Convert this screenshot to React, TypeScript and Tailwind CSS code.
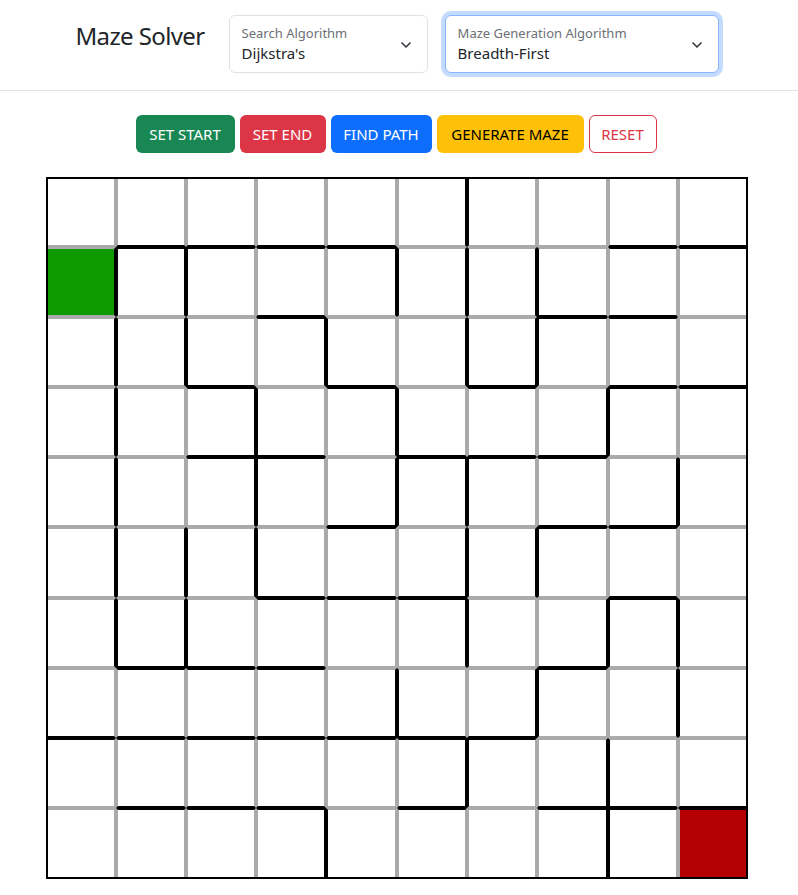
import { ChevronDown } from "lucide-react";

// 1 = wall (black), 0 = open (gray)
const VERT = [
  "000001000",
  "110011100",
  "110101100",
  "101010010",
  "101011001",
  "111001100",
  "110001011",
  "000010101",
  "000001010",
  "000100010",
];

const HORIZ = [
  "0111100011",
  "0001000110",
  "0010101011",
  "0011011100",
  "0000100110",
  "0001110010",
  "0111000100",
  "1111111000",
  "0111010111",
];

const START = [1, 0];
const END = [9, 9];

function Cell({ r, c }: { r: number; c: number }) {
  const cls: string[] = [];
  if (c > 0) cls.push("border-l-2", VERT[r][c - 1] === "1" ? "border-l-black" : "border-l-[#aaaaaa]");
  if (c < 9) cls.push("border-r-2", VERT[r][c] === "1" ? "border-r-black" : "border-r-[#aaaaaa]");
  if (r > 0) cls.push("border-t-2", HORIZ[r - 1][c] === "1" ? "border-t-black" : "border-t-[#aaaaaa]");
  if (r < 9) cls.push("border-b-2", HORIZ[r][c] === "1" ? "border-b-black" : "border-b-[#aaaaaa]");

  if (r === START[0] && c === START[1]) cls.push("bg-[#0e9b00]");
  else if (r === END[0] && c === END[1]) cls.push("bg-[#b40000]");
  else cls.push("bg-white");

  return <div className={cls.join(" ")} />;
}

function FloatingSelect({ label, value, focused, width }: { label: string; value: string; focused?: boolean; width: string }) {
  return (
    <div
      className={
        "relative h-[58px] rounded-md bg-white border " +
        width +
        (focused ? " border-[#86b7fe] shadow-[0_0_0_4px_rgba(13,110,253,0.25)]" : " border-[#dee2e6]")
      }
    >
      <div className="absolute left-[12px] top-[9px] text-[13px] leading-[17px] text-[#6c7075] whitespace-nowrap">{label}</div>
      <div className="absolute left-[12px] top-[27px] text-[15px] leading-[20px] text-[#212529] whitespace-nowrap">{value}</div>
      <ChevronDown className="absolute right-[13px] top-[21px] w-[16px] h-[16px] text-[#343a40]" strokeWidth={2.5} />
    </div>
  );
}

export default function App() {
  const cells = [];
  for (let r = 0; r < 10; r++) for (let c = 0; c < 10; c++) cells.push(<Cell key={r + "-" + c} r={r} c={c} />);

  return (
    <div className="min-h-screen bg-white text-[#212529] font-['Noto_Sans',sans-serif]">
      {/* Header */}
      <header className="h-[91px] border-b border-[#dee2e6] flex items-center justify-center pb-[2px] pr-[4px]">
        <h1 className="text-[24px] leading-none font-normal tracking-[-0.6px] whitespace-nowrap mr-[24px] mb-[17px]">Maze Solver</h1>
        <FloatingSelect label="Search Algorithm" value="Dijkstra's" width="w-[199px]" />
        <div className="w-[17px]" />
        <FloatingSelect label="Maze Generation Algorithm" value="Breadth-First" focused width="w-[274px]" />
      </header>

      {/* Controls */}
      <div className="flex justify-center gap-[5px] mt-[24px] pr-[6px] text-[15px]">
        <button className="w-[99px] h-[38px] rounded-md bg-[#198754] text-white whitespace-nowrap">SET START</button>
        <button className="w-[86px] h-[38px] rounded-md bg-[#dc3545] text-white whitespace-nowrap">SET END</button>
        <button className="w-[101px] h-[38px] rounded-md bg-[#0d6efd] text-white whitespace-nowrap">FIND PATH</button>
        <button className="w-[147px] h-[38px] rounded-md bg-[#ffc107] text-black whitespace-nowrap">GENERATE MAZE</button>
        <button className="w-[68px] h-[38px] rounded-md border border-[#dc3545] text-[#dc3545] whitespace-nowrap">RESET</button>
      </div>

      {/* Maze */}
      <div className="flex justify-center mt-[24px] pb-[16px] pr-[4px]">
        <div className="border-2 border-black grid grid-cols-[68px_70px_70px_70px_71px_70px_70px_71px_70px_68px] grid-rows-[68px_70px_70px_70px_70px_71px_70px_70px_70px_69px]">
          {cells}
        </div>
      </div>
    </div>
  );
}
